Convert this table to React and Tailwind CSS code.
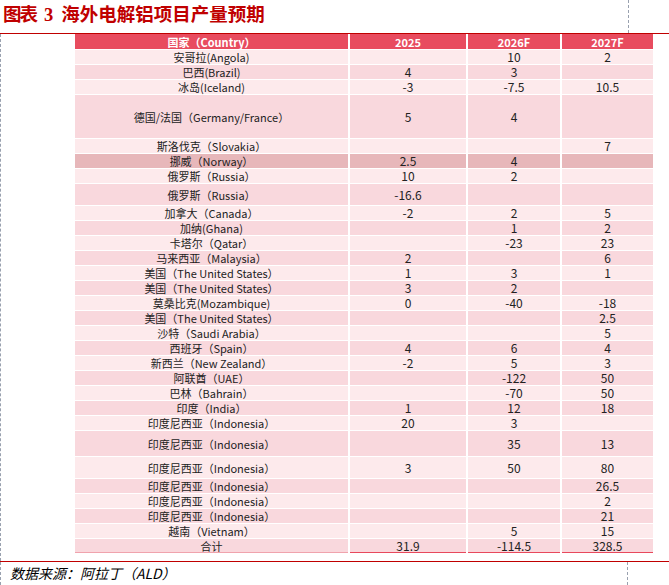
const rows = [
  { c: "安哥拉(Angola)", a: "", b: "10", d: "2" },
  { c: "巴西(Brazil)", a: "4", b: "3", d: "" },
  { c: "冰岛(Iceland)", a: "-3", b: "-7.5", d: "10.5" },
  { c: "德国/法国（Germany/France）", a: "5", b: "4", d: "", h: "h-[43px]" },
  { c: "斯洛伐克（Slovakia）", a: "", b: "", d: "7" },
  { c: "挪威（Norway）", a: "2.5", b: "4", d: "", dark: true },
  { c: "俄罗斯（Russia）", a: "10", b: "2", d: "" },
  { c: "俄罗斯（Russia）", a: "-16.6", b: "", d: "", h: "h-[21px]" },
  { c: "加拿大（Canada）", a: "-2", b: "2", d: "5" },
  { c: "加纳(Ghana)", a: "", b: "1", d: "2" },
  { c: "卡塔尔（Qatar）", a: "", b: "-23", d: "23" },
  { c: "马来西亚（Malaysia）", a: "2", b: "", d: "6" },
  { c: "美国（The United States）", a: "1", b: "3", d: "1" },
  { c: "美国（The United States）", a: "3", b: "2", d: "" },
  { c: "莫桑比克(Mozambique)", a: "0", b: "-40", d: "-18" },
  { c: "美国（The United States）", a: "", b: "", d: "2.5" },
  { c: "沙特（Saudi Arabia）", a: "", b: "", d: "5" },
  { c: "西班牙（Spain）", a: "4", b: "6", d: "4" },
  { c: "新西兰（New Zealand）", a: "-2", b: "5", d: "3" },
  { c: "阿联酋（UAE）", a: "", b: "-122", d: "50" },
  { c: "巴林（Bahrain）", a: "", b: "-70", d: "50" },
  { c: "印度（India）", a: "1", b: "12", d: "18" },
  { c: "印度尼西亚（Indonesia）", a: "20", b: "3", d: "" },
  { c: "印度尼西亚（Indonesia）", a: "", b: "35", d: "13", h: "h-[25px]" },
  { c: "印度尼西亚（Indonesia）", a: "3", b: "50", d: "80", h: "h-[21px]" },
  { c: "印度尼西亚（Indonesia）", a: "", b: "", d: "26.5" },
  { c: "印度尼西亚（Indonesia）", a: "", b: "", d: "2" },
  { c: "印度尼西亚（Indonesia）", a: "", b: "", d: "21" },
  { c: "越南（Vietnam）", a: "", b: "5", d: "15" },
]

function Cell({ children, className = "" }) {
  return <div className={`flex items-center justify-center ${className}`}>{children}</div>
}

export default function App() {
  return (
    <div className="w-[669px] h-[585px] bg-white overflow-hidden text-[#222] font-['Noto_Sans_CJK_SC',sans-serif]">
      {/* title */}
      <div className="h-[34px] border-b border-[#c00000] flex">
        <div className="w-[629px] border-r border-dashed border-gray-400 pl-[3px] pt-[3px] flex text-[18.5px] leading-[25px] font-bold text-[#c00000] font-['Liberation_Serif','Noto_Sans_CJK_SC',serif]">
          <span className="tracking-[-2px]">图表</span>
          <span className="ml-[8px]">3</span>
          <span className="ml-[8px]">海外电解铝项目产量预期</span>
        </div>
      </div>

      {/* table */}
      <div className="h-[527px] border-l border-dashed border-gray-400 pl-[74px]">
        <div className="w-[578px] flex flex-col gap-px bg-white text-[11px] leading-[12px]">
          <div className="grid grid-cols-[273px_116px_92px_91px] gap-x-[2px] h-[15px] text-white font-bold">
            <Cell className="bg-[#e84c5f]">国家（Country）</Cell>
            <Cell className="bg-[#e84c5f]">2025</Cell>
            <Cell className="bg-[#e84c5f]">2026F</Cell>
            <Cell className="bg-[#e84c5f]">2027F</Cell>
          </div>
          {rows.map((r, i) => {
            const bg = r.dark ? "bg-[#e7b7ba]" : i % 2 === 0 ? "bg-[#fdeaec]" : "bg-[#f9d8dd]"
            return (
              <div key={i} className={`grid grid-cols-[273px_116px_92px_91px] gap-x-[2px] ${r.h || "h-[14px]"}`}>
                <Cell className={bg}>{r.c}</Cell>
                <Cell className={`${bg} text-[12px]`}>{r.a}</Cell>
                <Cell className={`${bg} text-[12px]`}>{r.b}</Cell>
                <Cell className={`${bg} text-[12px]`}>{r.d}</Cell>
              </div>
            )
          })}
          <div className="grid grid-cols-[273px_116px_92px_91px] gap-x-[2px] h-[14px] text-[12px]">
            <Cell className="bg-[#f9d8dd] border-b border-[#f0a3ad] text-[11px]">合计</Cell>
            <Cell className="bg-[#f9d8dd] border-b border-[#e8485c]">31.9</Cell>
            <Cell className="bg-[#f9d8dd] border-b border-[#e8485c]">-114.5</Cell>
            <Cell className="bg-[#f9d8dd] border-b border-[#e8485c]">328.5</Cell>
          </div>
        </div>
      </div>

      {/* source */}
      <div className="h-[24px] border-t border-[#c00000] flex">
        <div className="w-[628px] border-l border-r border-dashed border-gray-400 pl-[9px] pt-[2px] text-[14px] leading-[18px] italic text-black">
          数据来源：阿拉丁（ALD）
        </div>
      </div>
    </div>
  )
}
